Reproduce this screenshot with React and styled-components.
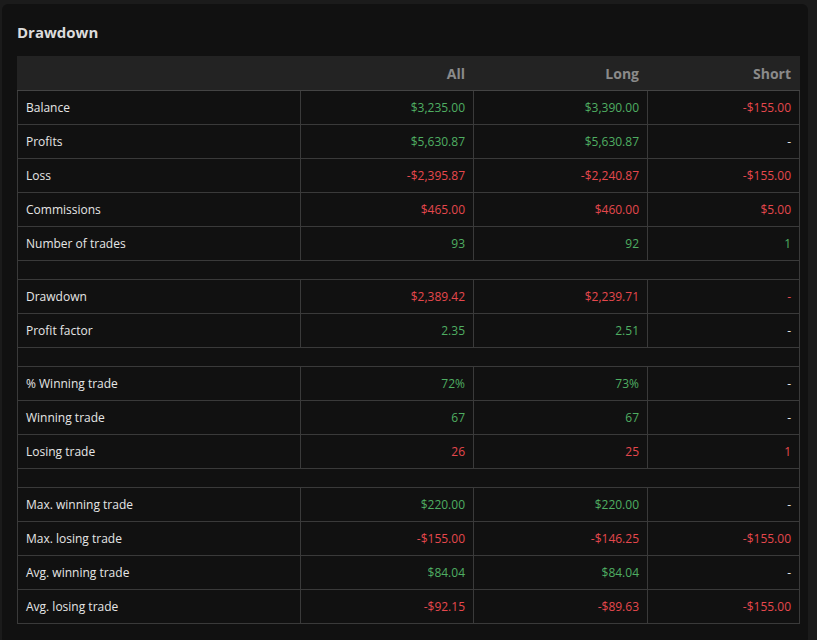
import styled, { createGlobalStyle } from "styled-components";

const Global = createGlobalStyle`
  body { margin: 0; background: #1b1b1b; font-family: "Open Sans", "Segoe UI", sans-serif; }
`;

const Page = styled.div`
  display: flex;
  flex-direction: column;
  gap: 4px;
  height: 640px;
  overflow: hidden;
  padding-right: 9px;
`;

const TopCard = styled.div`
  height: 8px;
  margin-left: 2px;
  background: #111;
  border-radius: 0 0 6px 6px;
`;

const Card = styled.div`
  margin-left: 2px;
  background: #111;
  border-radius: 6px;
  padding: 18px 8px 20px 15px;
`;

const Title = styled.h2`
  margin: 0 0 14px;
  font-size: 15px;
  font-weight: 700;
  color: #dcdcdc;
`;

const Table = styled.table`
  width: 100%;
  border-collapse: collapse;
  font-size: 12px;
  color: #e6e6e6;
`;

const Th = styled.th`
  height: 33px;
  background: #232323;
  color: #8a8a8a;
  font-size: 14px;
  font-weight: 700;
  text-align: right;
  padding: 0 8px;
  border: 1px solid #232323;
  border-bottom-color: #444;
`;

const Td = styled.td`
  height: 33px;
  padding: 0 8px;
  border: 1px solid #3a3a3a;
  text-align: ${({ $label }) => ($label ? "left" : "right")};
  color: ${({ $c }) =>
    $c === "g" ? "#4fae62" : $c === "r" ? "#e5484d" : "#e6e6e6"};
`;

const Gap = styled.td`
  height: 16px;
  border: 1px solid #3a3a3a;
`;

const rows = [
  ["Balance", ["$3,235.00", "g"], ["$3,390.00", "g"], ["-$155.00", "r"]],
  ["Profits", ["$5,630.87", "g"], ["$5,630.87", "g"], ["-", ""]],
  ["Loss", ["-$2,395.87", "r"], ["-$2,240.87", "r"], ["-$155.00", "r"]],
  ["Commissions", ["$465.00", "r"], ["$460.00", "r"], ["$5.00", "r"]],
  ["Number of trades", ["93", "g"], ["92", "g"], ["1", "g"]],
  null,
  ["Drawdown", ["$2,389.42", "r"], ["$2,239.71", "r"], ["-", "r"]],
  ["Profit factor", ["2.35", "g"], ["2.51", "g"], ["-", ""]],
  null,
  ["% Winning trade", ["72%", "g"], ["73%", "g"], ["-", ""]],
  ["Winning trade", ["67", "g"], ["67", "g"], ["-", ""]],
  ["Losing trade", ["26", "r"], ["25", "r"], ["1", "r"]],
  null,
  ["Max. winning trade", ["$220.00", "g"], ["$220.00", "g"], ["-", ""]],
  ["Max. losing trade", ["-$155.00", "r"], ["-$146.25", "r"], ["-$155.00", "r"]],
  ["Avg. winning trade", ["$84.04", "g"], ["$84.04", "g"], ["-", ""]],
  ["Avg. losing trade", ["-$92.15", "r"], ["-$89.63", "r"], ["-$155.00", "r"]],
];

export default function App() {
  return (
    <Page>
      <Global />
      <TopCard />
      <Card>
        <Title>Drawdown</Title>
        <Table>
          <colgroup>
            <col style={{ width: 283 }} />
            <col style={{ width: 173 }} />
            <col style={{ width: 174 }} />
            <col />
          </colgroup>
          <thead>
            <tr>
              <Th />
              <Th>All</Th>
              <Th>Long</Th>
              <Th>Short</Th>
            </tr>
          </thead>
          <tbody>
            {rows.map((r, i) =>
              r ? (
                <tr key={i}>
                  <Td $label>{r[0]}</Td>
                  {r.slice(1).map(([v, c], j) => (
                    <Td key={j} $c={c}>{v}</Td>
                  ))}
                </tr>
              ) : (
                <tr key={i}>
                  <Gap colSpan={4} />
                </tr>
              )
            )}
          </tbody>
        </Table>
      </Card>
    </Page>
  );
}
